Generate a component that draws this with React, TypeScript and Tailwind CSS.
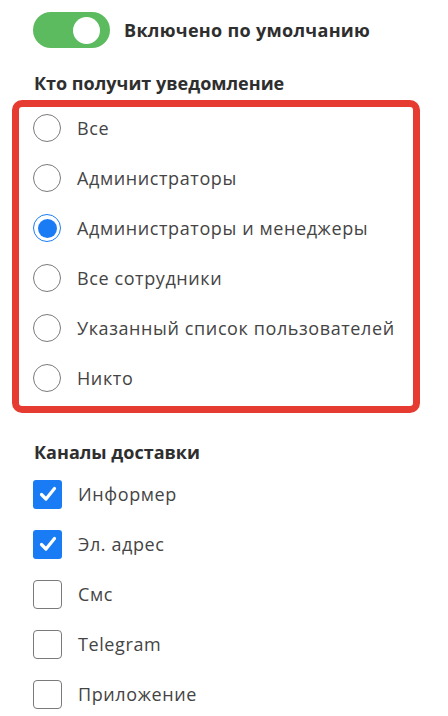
import React from "react";

const radios = [
  { label: "Все", checked: false },
  { label: "Администраторы", checked: false },
  { label: "Администраторы и менеджеры", checked: true },
  { label: "Все сотрудники", checked: false },
  { label: "Указанный список пользователей", checked: false },
  { label: "Никто", checked: false },
];

const channels = [
  { label: "Информер", checked: true },
  { label: "Эл. адрес", checked: true },
  { label: "Смс", checked: false },
  { label: "Telegram", checked: false },
  { label: "Приложение", checked: false },
];

function Radio({ checked }: { checked: boolean }) {
  return checked ? (
    <div className="w-[28px] h-[28px] rounded-full border-[1.5px] border-[#1a7cf5] flex items-center justify-center shrink-0">
      <div className="w-[19px] h-[19px] rounded-full bg-[#1a7cf5]" />
    </div>
  ) : (
    <div className="w-[28px] h-[28px] rounded-full border-[1.5px] border-[#7a7a7a] shrink-0" />
  );
}

function Checkbox({ checked }: { checked: boolean }) {
  return checked ? (
    <div className="w-[29px] h-[29px] rounded-[3px] bg-[#1a7cf5] flex items-center justify-center shrink-0">
      <svg width="20" height="20" viewBox="0 0 20 20" fill="none">
        <path d="M3.5 10.5 L8 15 L16.5 4.5" stroke="white" strokeWidth="3.2" strokeLinecap="round" strokeLinejoin="round" />
      </svg>
    </div>
  ) : (
    <div className="w-[29px] h-[29px] rounded-[4px] border-[1.5px] border-[#7a7a7a] shrink-0" />
  );
}

export default function App() {
  return (
    <div className="w-[448px] h-[716px] bg-white overflow-hidden text-[#3d3d3d]" style={{ fontFamily: "'Open Sans', 'Noto Sans', sans-serif" }}>
      <div className="flex items-center pl-[33px] pt-[12px] h-[48px]">
        <div className="w-[77px] h-[36px] rounded-full bg-[#5cba5f] flex items-center justify-end pr-[10px]">
          <div className="w-[27px] h-[27px] rounded-full bg-white" />
        </div>
        <span className="ml-[14px] text-[18px] font-bold tracking-[0.3px] text-[#2e2e2e]">Включено по умолчанию</span>
      </div>

      <div className="pl-[34px] mt-[24px] text-[18px] font-bold leading-[22px] text-[#2e2e2e]">Кто получит уведомление</div>

      <div className="ml-[12px] w-[408px] mt-[6px] h-[313px] border-[7px] border-[#e53b30] rounded-[10px] pl-[14px] pt-[6px]">
        <div className="flex flex-col gap-[20px]">
          {radios.map((r) => (
            <div key={r.label} className="flex items-center h-[30px]">
              <Radio checked={r.checked} />
              <span className="ml-[16px] text-[18px] tracking-[0.6px] text-[#444444]">{r.label}</span>
            </div>
          ))}
        </div>
      </div>

      <div className="pl-[34px] mt-[28px] text-[18px] font-bold leading-[22px] text-[#2e2e2e]">Каналы доставки</div>

      <div className="pl-[33px] mt-[6px] flex flex-col">
        {channels.map((c) => (
          <div key={c.label} className="flex items-center h-[50px]">
            <Checkbox checked={c.checked} />
            <span className="ml-[16px] text-[18px] tracking-[0.6px] text-[#444444]">{c.label}</span>
          </div>
        ))}
      </div>
    </div>
  );
}
